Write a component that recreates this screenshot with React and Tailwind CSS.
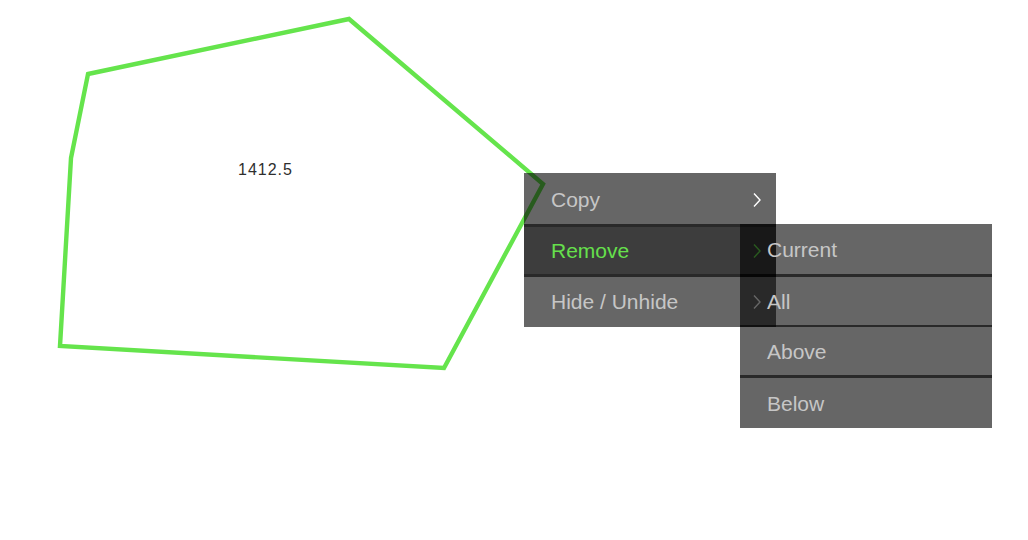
import React from 'react';

const Chevron = ({ className }) => (
  <svg className={className} width="10" height="16" viewBox="0 0 10 16" fill="none">
    <path d="M2 1.5l6 6.5-6 6.5" stroke="currentColor" strokeWidth="1.4" />
  </svg>
);

const mainItems = [
  { label: 'Copy', active: false, h: 'h-[51px]', pt: 'pt-[2px]' },
  { label: 'Remove', active: true, h: 'h-[47px]', pt: 'pt-[0px]' },
  { label: 'Hide / Unhide', active: false, h: 'h-[50px]', pt: 'pt-[0px]' },
];

const subItems = [
  { label: 'Current', h: 'h-[50px]', sep: '' },
  { label: 'All', h: 'h-[48px]', sep: 'h-[3px]' },
  { label: 'Above', h: 'h-[48px]', sep: 'h-[2px]' },
  { label: 'Below', h: 'h-[50px]', sep: 'h-[3px]' },
];

export default function App() {
  return (
    <div
      className="relative w-[1028px] h-[540px] bg-white overflow-hidden"
      style={{ fontFamily: '"Liberation Sans", Arial, sans-serif' }}
    >
      {/* Shape canvas */}
      <svg className="absolute inset-0" width="1028" height="540">
        <polygon
          points="88,74 349,19 543,184 444,368 60,346 71,158"
          fill="none"
          stroke="#65e44c"
          strokeWidth="4.4"
        />
      </svg>
      <div className="absolute left-[238px] top-[158px] text-[16px] tracking-[1px] text-[#2e2e2e] font-medium">
        1412.5
      </div>

      {/* Context menu */}
      <div className="absolute left-[524px] top-[173px] w-[252px] flex flex-col bg-black/60">
        {mainItems.map((item, i) => (
          <React.Fragment key={item.label}>
            {i > 0 && <div className="h-[3px] bg-black/60" />}
            <div
              className={`${item.h} ${item.pt} flex items-center justify-between pl-[27px] pr-[14px] text-[21px] ${
                item.active ? 'bg-black/40 text-[#66e04c]' : 'text-[#c6c6c6]'
              }`}
            >
              <span>{item.label}</span>
              <Chevron className={item.active ? 'text-[#66e04c]' : 'text-white'} />
            </div>
          </React.Fragment>
        ))}
      </div>

      {/* Submenu */}
      <div className="absolute left-[740px] top-[224px] w-[252px] flex flex-col bg-black/60">
        {subItems.map((item) => (
          <React.Fragment key={item.label}>
            {item.sep && <div className={`${item.sep} bg-black/60`} />}
            <div className={`${item.h} pt-[2px] flex items-center pl-[27px] text-[21px] text-[#c6c6c6]`}>
              {item.label}
            </div>
          </React.Fragment>
        ))}
      </div>
    </div>
  );
}
